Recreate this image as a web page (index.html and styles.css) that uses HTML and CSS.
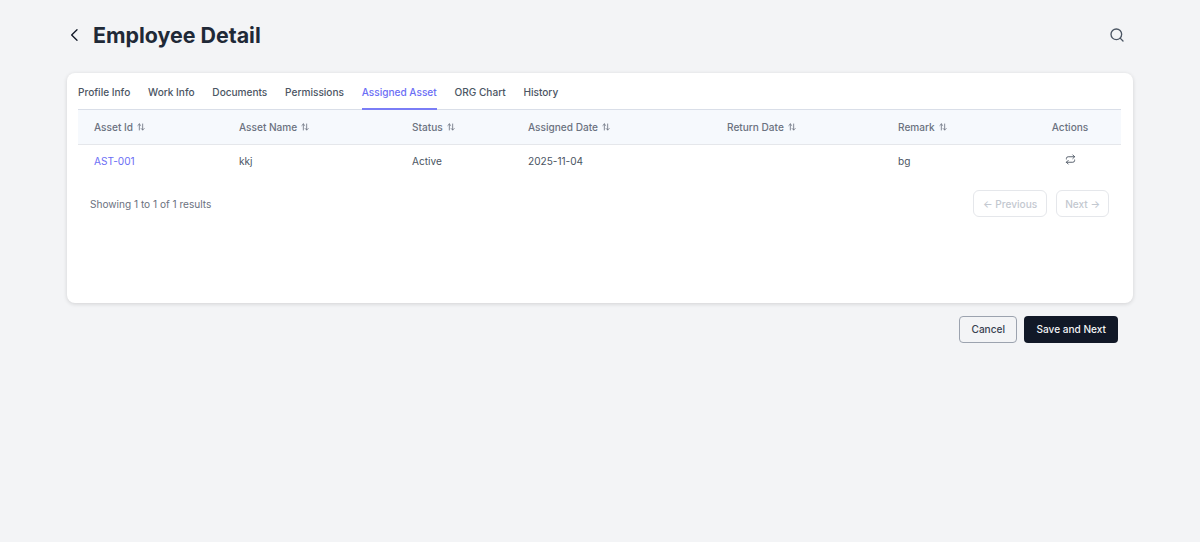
FILE: index.html
```html
<!DOCTYPE html>
<html lang="en">
<head>
<meta charset="utf-8">
<title>Employee Detail</title>
<link rel="stylesheet" href="styles.css">
</head>
<body>
<main class="page">
  <header class="page-head">
    <div class="title-group">
      <svg class="back-icon" viewBox="0 0 24 24" fill="none" stroke="currentColor" stroke-width="2" stroke-linecap="round" stroke-linejoin="round"><path d="M15 4 7 12l8 8"/></svg>
      <h1 class="title">Employee Detail</h1>
    </div>
    <svg class="search-icon" viewBox="0 0 24 24" fill="none" stroke="currentColor" stroke-width="2" stroke-linecap="round" stroke-linejoin="round"><circle cx="11" cy="11" r="8"/><path d="m21 21-4.3-4.3"/></svg>
  </header>

  <section class="card">
    <nav class="tabs">
      <span class="tab">Profile Info</span>
      <span class="tab">Work Info</span>
      <span class="tab">Documents</span>
      <span class="tab">Permissions</span>
      <span class="tab tab-active">Assigned Asset</span>
      <span class="tab">ORG Chart</span>
      <span class="tab">History</span>
    </nav>
    <div class="table">
      <div class="row row-head">
        <div class="cell">Asset Id <svg class="sort" viewBox="0 0 24 24" fill="none" stroke="currentColor" stroke-width="2.500" stroke-linecap="round" stroke-linejoin="round"><path d="M7 21V3M2.500 7.500 7 3l4.500 4.500M17 3v18M12.500 16.500 17 21l4.500-4.500"/></svg></div>
        <div class="cell">Asset Name <svg class="sort" viewBox="0 0 24 24" fill="none" stroke="currentColor" stroke-width="2.500" stroke-linecap="round" stroke-linejoin="round"><path d="M7 21V3M2.500 7.500 7 3l4.500 4.500M17 3v18M12.500 16.500 17 21l4.500-4.500"/></svg></div>
        <div class="cell">Status <svg class="sort" viewBox="0 0 24 24" fill="none" stroke="currentColor" stroke-width="2.500" stroke-linecap="round" stroke-linejoin="round"><path d="M7 21V3M2.500 7.500 7 3l4.500 4.500M17 3v18M12.500 16.500 17 21l4.500-4.500"/></svg></div>
        <div class="cell">Assigned Date <svg class="sort" viewBox="0 0 24 24" fill="none" stroke="currentColor" stroke-width="2.500" stroke-linecap="round" stroke-linejoin="round"><path d="M7 21V3M2.500 7.500 7 3l4.500 4.500M17 3v18M12.500 16.500 17 21l4.500-4.500"/></svg></div>
        <div class="cell">Return Date <svg class="sort" viewBox="0 0 24 24" fill="none" stroke="currentColor" stroke-width="2.500" stroke-linecap="round" stroke-linejoin="round"><path d="M7 21V3M2.500 7.500 7 3l4.500 4.500M17 3v18M12.500 16.500 17 21l4.500-4.500"/></svg></div>
        <div class="cell">Remark <svg class="sort" viewBox="0 0 24 24" fill="none" stroke="currentColor" stroke-width="2.500" stroke-linecap="round" stroke-linejoin="round"><path d="M7 21V3M2.500 7.500 7 3l4.500 4.500M17 3v18M12.500 16.500 17 21l4.500-4.500"/></svg></div>
        <div class="cell cell-center">Actions</div>
      </div>
      <div class="row row-body">
        <div class="cell link">AST-001</div>
        <div class="cell">kkj</div>
        <div class="cell">Active</div>
        <div class="cell">2025-11-04</div>
        <div class="cell"></div>
        <div class="cell">bg</div>
        <div class="cell cell-center cell-action">
          <svg class="swap-icon" viewBox="0 0 24 24" fill="none" stroke="currentColor" stroke-width="2" stroke-linecap="round" stroke-linejoin="round"><path d="m17 2 4 4-4 4"/><path d="M3 11v-1a4 4 0 0 1 4-4h14"/><path d="m7 22-4-4 4-4"/><path d="M21 13v1a4 4 0 0 1-4 4H3"/></svg>
        </div>
      </div>
    </div>
    <div class="pager">
      <span class="pager-info">Showing 1 to 1 of 1 results</span>
      <div class="pager-buttons">
        <span class="page-btn page-btn-prev">← Previous</span>
        <span class="page-btn">Next →</span>
      </div>
    </div>
  </section>

  <footer class="actions">
    <span class="btn btn-cancel">Cancel</span>
    <span class="btn btn-primary">Save and Next</span>
  </footer>
</main>
</body>
</html>
```
FILE: styles.css
```css
* { box-sizing: border-box; }
html, body { margin: 0; height: 100%; }
body {
  background: #f3f4f6;
  font-family: Inter, "Liberation Sans", sans-serif;
  color: #374151;
  overflow: hidden;
}
.page { padding: 0 67px; }
.page-head {
  height: 73px;
  display: flex;
  align-items: center;
  justify-content: space-between;
  padding-bottom: 4px;
}
.title-group { display: flex; align-items: center; gap: 10px; }
.back-icon { width: 16px; height: 16px; color: #111827; }
.title {
  margin: 0;
  font-size: 21.4px;
  line-height: 30px;
  font-weight: 700;
  color: #1f2937;
}
.search-icon { width: 16px; height: 16px; color: #4b5563; margin-right: 8px; }

.card {
  height: 230px;
  background: #fff;
  border-radius: 8px;
  box-shadow: 0 1px 4px rgba(0, 0, 0, .14);
  padding: 0 12px 0 11px;
}
.tabs {
  height: 37px;
  display: flex;
  gap: 17.8px;
  border-bottom: 1px solid #d9dee8;
}
.tab {
  height: 37px;
  padding-top: 12px;
  font-size: 10.08px;
  line-height: 14px;
  font-weight: 500;
  color: #4b5563;
}
.tab-active {
  color: #6b6ef5;
  border-bottom: 2px solid #7a7df6;
}
.row {
  display: grid;
  grid-template-columns: 145px 173px 116px 199px 171px 154px 85px;
  align-items: center;
  border-bottom: 1px solid #e5e7eb;
  font-size: 10.08px;
}
.row-head {
  height: 35px;
  background: #f6f9fd;
  font-weight: 500;
  color: #6b7280;
}
.row-body {
  height: 34px;
  border-bottom: 0;
  padding-bottom: 2px;
  color: #4b5563;
}
.cell { padding-left: 16px; display: flex; align-items: center; gap: 1.500px; white-space: pre; }
.cell-center { padding-left: 0; padding-right: 17px; justify-content: center; }
.cell-action { padding-bottom: 4px; }
.link { color: #6b6ef5; }
.sort { width: 8px; height: 8px; color: #6b7280; }
.swap-icon { width: 11px; height: 11px; color: #4b5563; }

.pager {
  display: flex;
  align-items: center;
  justify-content: space-between;
  padding: 11px 12px 0 12px;
}
.pager-info { font-size: 10.08px; color: #6b7280; }
.pager-buttons { display: flex; gap: 9px; }
.page-btn {
  height: 27px;
  padding: 0 8px;
  display: flex;
  align-items: center;
  font-size: 10.08px;
  font-weight: 500;
  color: #c3c8d0;
  background: #fff;
  border: 1px solid #e5e7eb;
  border-radius: 6px;
}
.page-btn-prev { padding: 0 9px; }

.actions {
  display: flex;
  justify-content: flex-end;
  gap: 7px;
  padding: 13px 15px 0 0;
}
.btn {
  height: 27px;
  padding: 0 12px 1px;
  display: flex;
  align-items: center;
  font-size: 10.08px;
  font-weight: 500;
  border-radius: 4px;
}
.btn-cancel { color: #374151; border: 1px solid #9ca3af; padding: 0 11.5px 1px; }
.btn-primary { color: #f3f4f6; background: #111827; }
```
